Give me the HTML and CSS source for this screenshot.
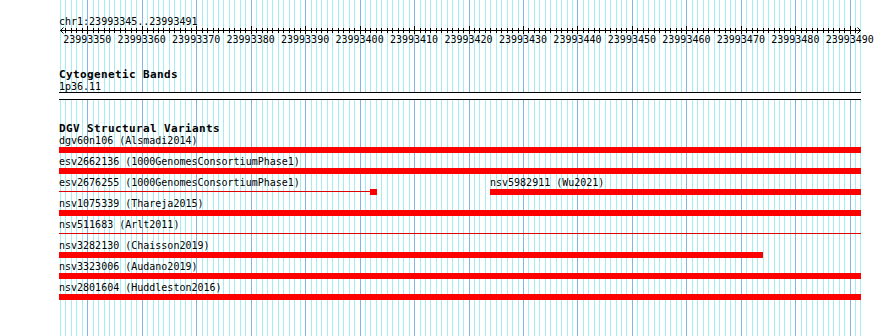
FILE: index.html
```html
<!DOCTYPE html>
<html>
<head>
<meta charset="utf-8">
<title>chr1:23993345..23993491</title>
<link rel="stylesheet" href="styles.css">
</head>
<body>
<div class="view">
  <svg class="grid" width="890" height="336" viewBox="0 0 890 336" shape-rendering="crispEdges">
    <path class="minor-line" d="M60.5 0V336M65.5 0V336M71.5 0V336M76.5 0V336M82.5 0V336M93.5 0V336M98.5 0V336M104.5 0V336M109.5 0V336M114.5 0V336M120.5 0V336M125.5 0V336M131.5 0V336M136.5 0V336M147.5 0V336M153.5 0V336M158.5 0V336M163.5 0V336M169.5 0V336M174.5 0V336M180.5 0V336M185.5 0V336M191.5 0V336M202.5 0V336M207.5 0V336M213.5 0V336M218.5 0V336M223.5 0V336M229.5 0V336M234.5 0V336M240.5 0V336M245.5 0V336M256.5 0V336M262.5 0V336M267.5 0V336M272.5 0V336M278.5 0V336M283.5 0V336M289.5 0V336M294.5 0V336M300.5 0V336M311.5 0V336M316.5 0V336M321.5 0V336M327.5 0V336M332.5 0V336M338.5 0V336M343.5 0V336M349.5 0V336M354.5 0V336M365.5 0V336M370.5 0V336M376.5 0V336M381.5 0V336M387.5 0V336M392.5 0V336M398.5 0V336M403.5 0V336M409.5 0V336M420.5 0V336M425.5 0V336M430.5 0V336M436.5 0V336M441.5 0V336M447.5 0V336M452.5 0V336M458.5 0V336M463.5 0V336M474.5 0V336M479.5 0V336M485.5 0V336M490.5 0V336M496.5 0V336M501.5 0V336M507.5 0V336M512.5 0V336M518.5 0V336M528.5 0V336M534.5 0V336M539.5 0V336M545.5 0V336M550.5 0V336M556.5 0V336M561.5 0V336M567.5 0V336M572.5 0V336M583.5 0V336M588.5 0V336M594.5 0V336M599.5 0V336M605.5 0V336M610.5 0V336M616.5 0V336M621.5 0V336M626.5 0V336M637.5 0V336M643.5 0V336M648.5 0V336M654.5 0V336M659.5 0V336M665.5 0V336M670.5 0V336M676.5 0V336M681.5 0V336M692.5 0V336M697.5 0V336M703.5 0V336M708.5 0V336M714.5 0V336M719.5 0V336M725.5 0V336M730.5 0V336M735.5 0V336M746.5 0V336M752.5 0V336M757.5 0V336M763.5 0V336M768.5 0V336M774.5 0V336M779.5 0V336M784.5 0V336M790.5 0V336M801.5 0V336M806.5 0V336M812.5 0V336M817.5 0V336M823.5 0V336M828.5 0V336M833.5 0V336M839.5 0V336M844.5 0V336M855.5 0V336M860.5 0V336"/>
    <path class="major-line" d="M87.5 0V336M142.5 0V336M196.5 0V336M251.5 0V336M305.5 0V336M360.5 0V336M414.5 0V336M469.5 0V336M523.5 0V336M577.5 0V336M632.5 0V336M686.5 0V336M741.5 0V336M795.5 0V336M850.5 0V336"/>
  </svg>

  <div class="content">
    <div class="ruler">
      <div class="loc">chr1:23993345..23993491</div>
      <svg class="scale" width="803" height="8" viewBox="59 0 803 8" shape-rendering="crispEdges">
        <path class="axis" d="M60 4.5H861"/>
        <path class="axis" d="M63.5 1.5L60.5 4.5L63.5 7.5M857.5 1.5L860.5 4.5L857.5 7.5" shape-rendering="auto"/>
        <path class="tick" d="M65.5 2v5M71.5 2v5M76.5 2v5M82.5 2v5M93.5 2v5M98.5 2v5M104.5 2v5M109.5 2v5M114.5 2v5M120.5 2v5M125.5 2v5M131.5 2v5M136.5 2v5M147.5 2v5M153.5 2v5M158.5 2v5M163.5 2v5M169.5 2v5M174.5 2v5M180.5 2v5M185.5 2v5M191.5 2v5M202.5 2v5M207.5 2v5M213.5 2v5M218.5 2v5M223.5 2v5M229.5 2v5M234.5 2v5M240.5 2v5M245.5 2v5M256.5 2v5M262.5 2v5M267.5 2v5M272.5 2v5M278.5 2v5M283.5 2v5M289.5 2v5M294.5 2v5M300.5 2v5M311.5 2v5M316.5 2v5M321.5 2v5M327.5 2v5M332.5 2v5M338.5 2v5M343.5 2v5M349.5 2v5M354.5 2v5M365.5 2v5M370.5 2v5M376.5 2v5M381.5 2v5M387.5 2v5M392.5 2v5M398.5 2v5M403.5 2v5M409.5 2v5M420.5 2v5M425.5 2v5M430.5 2v5M436.5 2v5M441.5 2v5M447.5 2v5M452.5 2v5M458.5 2v5M463.5 2v5M474.5 2v5M479.5 2v5M485.5 2v5M490.5 2v5M496.5 2v5M501.5 2v5M507.5 2v5M512.5 2v5M518.5 2v5M528.5 2v5M534.5 2v5M539.5 2v5M545.5 2v5M550.5 2v5M556.5 2v5M561.5 2v5M567.5 2v5M572.5 2v5M583.5 2v5M588.5 2v5M594.5 2v5M599.5 2v5M605.5 2v5M610.5 2v5M616.5 2v5M621.5 2v5M626.5 2v5M637.5 2v5M643.5 2v5M648.5 2v5M654.5 2v5M659.5 2v5M665.5 2v5M670.5 2v5M676.5 2v5M681.5 2v5M692.5 2v5M697.5 2v5M703.5 2v5M708.5 2v5M714.5 2v5M719.5 2v5M725.5 2v5M730.5 2v5M735.5 2v5M746.5 2v5M752.5 2v5M757.5 2v5M763.5 2v5M768.5 2v5M774.5 2v5M779.5 2v5M784.5 2v5M790.5 2v5M801.5 2v5M806.5 2v5M812.5 2v5M817.5 2v5M823.5 2v5M828.5 2v5M833.5 2v5M839.5 2v5M844.5 2v5M855.5 2v5"/>
        <path class="tick" d="M87.5 0v8M142.5 0v8M196.5 0v8M251.5 0v8M305.5 0v8M360.5 0v8M414.5 0v8M469.5 0v8M523.5 0v8M577.5 0v8M632.5 0v8M686.5 0v8M741.5 0v8M795.5 0v8M850.5 0v8"/>
      </svg>
      <div class="ticks">
        <span>23993350</span><span>23993360</span><span>23993370</span><span>23993380</span><span>23993390</span><span>23993400</span><span>23993410</span><span>23993420</span><span>23993430</span><span>23993440</span><span>23993450</span><span>23993460</span><span>23993470</span><span>23993480</span><span>23993490</span>
      </div>
    </div>

    <section class="track cyto">
      <h2 class="track-title">Cytogenetic Bands</h2>
      <div class="label">1p36.11</div>
      <div class="band"></div>
    </section>

    <section class="track dgv">
      <h2 class="track-title">DGV Structural Variants</h2>

      <div class="row">
        <div class="feat" style="width:802px">
          <div class="label">dgv60n106 (Alsmadi2014)</div>
          <div class="bar"></div>
        </div>
      </div>

      <div class="row">
        <div class="feat" style="width:802px">
          <div class="label">esv2662136 (1000GenomesConsortiumPhase1)</div>
          <div class="bar"></div>
        </div>
      </div>

      <div class="row">
        <div class="feat" style="width:318px">
          <div class="label">esv2676255 (1000GenomesConsortiumPhase1)</div>
          <div class="span">
            <div class="stroke"></div>
            <div class="block"></div>
          </div>
        </div>
        <div class="feat" style="width:371px; margin-left:113px">
          <div class="label">nsv5982911 (Wu2021)</div>
          <div class="bar"></div>
        </div>
      </div>

      <div class="row">
        <div class="feat" style="width:802px">
          <div class="label">nsv1075339 (Thareja2015)</div>
          <div class="bar"></div>
        </div>
      </div>

      <div class="row">
        <div class="feat" style="width:802px">
          <div class="label">nsv511683 (Arlt2011)</div>
          <div class="span">
            <div class="stroke"></div>
          </div>
        </div>
      </div>

      <div class="row">
        <div class="feat" style="width:704px">
          <div class="label">nsv3282130 (Chaisson2019)</div>
          <div class="bar"></div>
        </div>
      </div>

      <div class="row">
        <div class="feat" style="width:802px">
          <div class="label">nsv3323006 (Audano2019)</div>
          <div class="bar"></div>
        </div>
      </div>

      <div class="row">
        <div class="feat" style="width:802px">
          <div class="label">nsv2801604 (Huddleston2016)</div>
          <div class="bar"></div>
        </div>
      </div>
    </section>
  </div>
</div>
</body>
</html>
```

FILE: styles.css
```css
* {
  margin: 0;
  padding: 0;
  box-sizing: border-box;
}

html,
body {
  background: #ffffff;
}

body {
  font-family: "DejaVu Sans Mono", "Liberation Mono", monospace;
  font-size: 10px;
  line-height: 11px;
  color: #000000;
}

.view {
  position: relative;
  width: 890px;
  height: 336px;
  overflow: hidden;
}

.grid {
  position: absolute;
  left: 0;
  top: 0;
  display: block;
}

.minor-line {
  stroke: #a6ecf0;
  stroke-width: 1;
  fill: none;
}

.major-line {
  stroke: #80b6e6;
  stroke-width: 1;
  fill: none;
}

.content {
  position: relative;
  width: 862px;
  padding: 16px 0 0 59px;
}

.loc {
  height: 11px;
  white-space: nowrap;
}

.scale {
  display: block;
  margin-top: -1px;
}

.axis,
.tick {
  stroke: #000000;
  stroke-width: 1;
  fill: none;
}

.ticks {
  display: flex;
  height: 11px;
  margin-left: 1px;
  white-space: nowrap;
}

.ticks span {
  flex: none;
  width: 54.47px;
  text-align: center;
}

.track-title {
  font-size: 11px;
  font-weight: bold;
  line-height: 12px;
  letter-spacing: 0.38px;
  white-space: nowrap;
}

.cyto {
  margin-top: 24px;
}

.label {
  height: 11px;
  white-space: nowrap;
}

.band {
  width: 802px;
  height: 8px;
  border-top: 1px solid #000000;
  border-bottom: 1px solid #000000;
  background: #ffffff;
}

.dgv {
  margin-top: 23px;
}

.row {
  display: flex;
  height: 21px;
}

.feat {
  flex: none;
  display: flex;
  flex-direction: column;
}

.bar {
  height: 6px;
  margin-top: 1px;
  background: #ff0000;
}

.span {
  display: flex;
  align-items: flex-start;
  height: 6px;
  margin-top: 1px;
}

.stroke {
  flex: 1;
  height: 1px;
  margin-top: 2px;
  background: #e00000;
}

.block {
  flex: none;
  width: 7px;
  height: 6px;
  background: #ff0000;
}
```
